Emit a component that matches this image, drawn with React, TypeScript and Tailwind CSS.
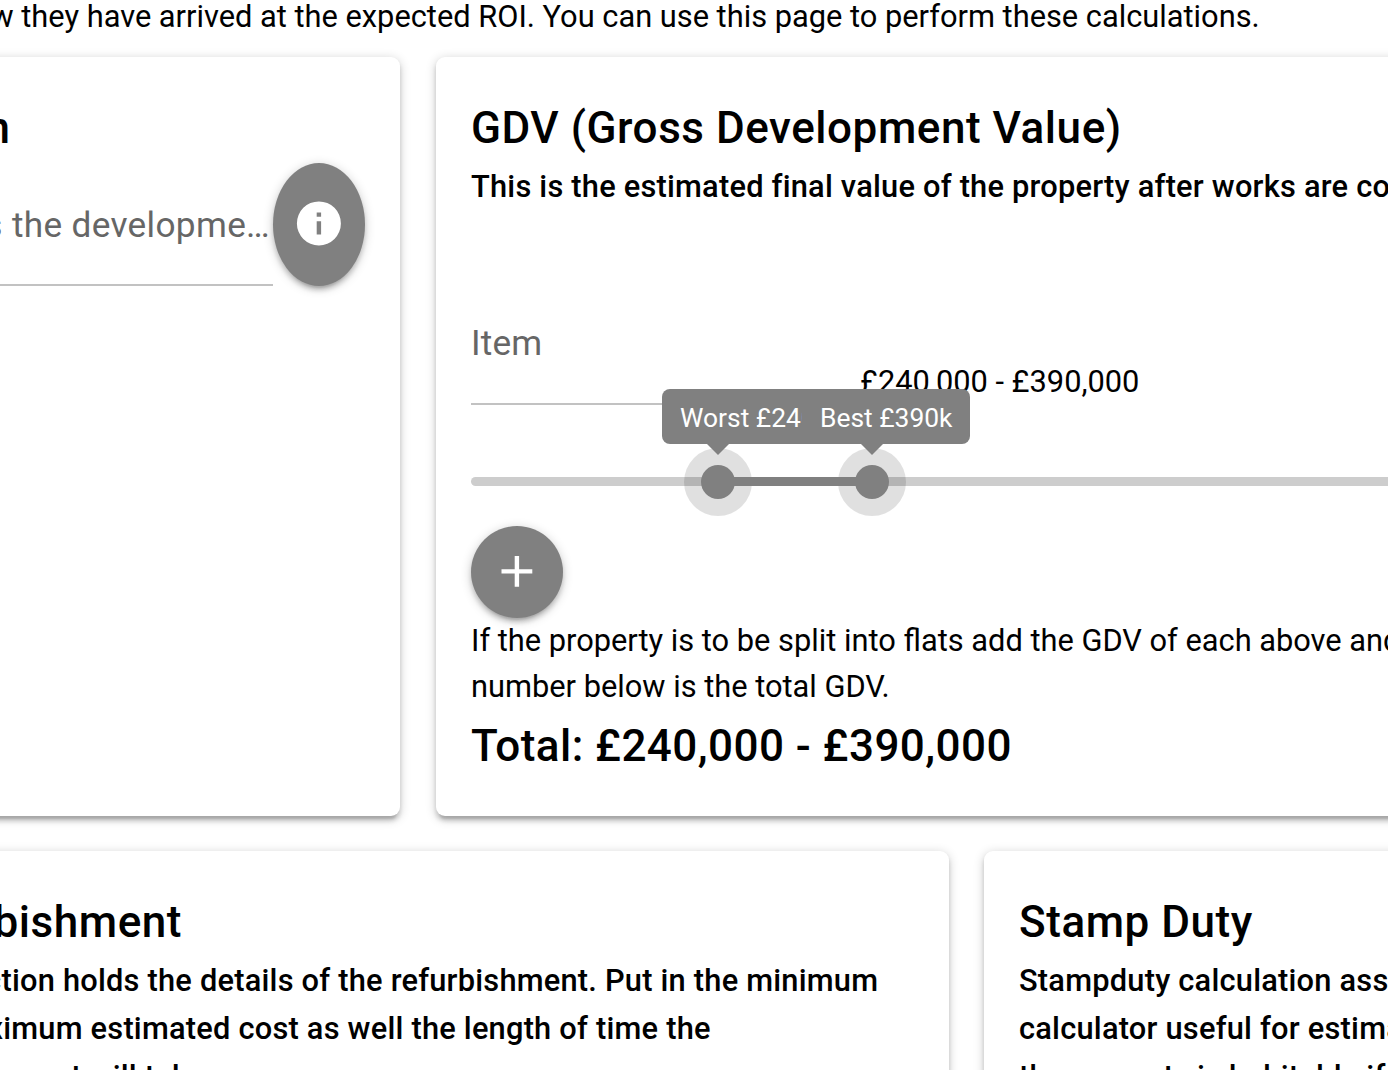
import React from "react";

const card = "shrink-0 rounded-[9px] bg-white shadow-[0_2.2px_11px_rgba(0,0,0,0.2),0_4.4px_4.4px_rgba(0,0,0,0.14),0_6.6px_2.2px_-4.4px_rgba(0,0,0,0.12)]";
const heading = "whitespace-nowrap text-[44px] leading-[64px] font-medium";
const strong = "whitespace-nowrap text-[30.8px] leading-[48px] font-medium tracking-[0.22px]";
const fab = "grid shrink-0 place-items-center rounded-[50%] bg-[#808080] shadow-[0_2.2px_11px_rgba(0,0,0,0.2),0_4.4px_4.4px_rgba(0,0,0,0.14),0_6.6px_2.2px_-4.4px_rgba(0,0,0,0.12)]";

function Thumb({ label, left, bubble }: { label: string; left: string; bubble: string }) {
  return (
    <div className={"absolute top-[-34px] size-[68px] rounded-full bg-black/12 " + left}>
      <div className="absolute left-[17px] top-[17px] size-[34px] rounded-full bg-[#808080]" />
      <div className={"absolute top-[-59px] h-[55px] rounded-lg bg-[#808080] pl-[18px] text-[26.4px] leading-[59px] whitespace-nowrap text-white " + bubble}>
        {label}
      </div>
      <div className="absolute left-[22px] top-[-5px] border-x-[12px] border-t-[12px] border-x-transparent border-t-[#808080]" />
    </div>
  );
}

export default function App() {
  return (
    <main className="flex h-[1070px] w-[1388px] flex-col overflow-hidden bg-white font-[Roboto,sans-serif] text-black">
      <p className="flex h-[57px] shrink-0 whitespace-nowrap text-[30.8px] leading-[34px]">
        <span className="-ml-[9.5px]">w they have arrived at the expected ROI. You can use this page to perform these calculations.</span>
      </p>
      <div className="flex h-[759px] shrink-0 gap-9">
        <section className={card + " -ml-10 w-[440px]"}>
          <h2 className={heading + " mt-[39px] w-[50px] text-right"}>n</h2>
          <div className="mt-[3px] flex">
            <div className="flex h-[123px] w-[313px] shrink-0 justify-end border-b-2 border-[#c2c2c2] pr-[3px] text-[35.2px] leading-[124px] tracking-[0.33px] whitespace-nowrap text-[#666666]">
              s the developme…
            </div>
            <button className={fab + " h-[123px] w-[92px]"}>
              <svg viewBox="0 0 24 24" className="size-[52.8px] -translate-x-[0.5px] -translate-y-px fill-white"><path d="M12 2a10 10 0 1 0 0 20 10 10 0 0 0 0-20m1 15h-2v-6h2zm0-8h-2V7h2z" /></svg>
            </button>
          </div>
        </section>
        <section className={card + " w-[1100px] pl-[35px]"}>
          <h2 className={heading + " mt-[39px] tracking-[0.55px]"}>GDV (Gross Development Value)</h2>
          <h3 className={strong + " mt-[3px]"}>This is the estimated final value of the property after works are complete</h3>
          <div className="mt-[75px] flex h-[119px]">
            <div className="h-[119px] w-[389px] border-b-2 border-[#c2c2c2] text-[35.2px] leading-[115px] tracking-[0.2px] text-[#666666]">Item</div>
            <div className="pt-[76px] text-[30.8px] leading-[40px] whitespace-nowrap">£240,000 - £390,000</div>
          </div>
          <div className="relative mt-[72px] h-[9px] rounded-l-full bg-[#cdcdcd]">
            <div className="relative z-10 ml-[247px] h-[9px] w-[154px] bg-[#808080]" />
            <div className="absolute left-0 top-[5px]">
              <Thumb label="Worst £240k" left="left-[213px]" bubble="left-[-22px] w-[162px]" />
              <Thumb label="Best £390k" left="left-[367px]" bubble="left-[-36px] w-[168px]" />
            </div>
          </div>
          <button className={fab + " mt-10 size-[92px]"}>
            <svg viewBox="0 0 24 24" className="size-[52.8px] -translate-x-[0.5px] -translate-y-px fill-white"><path d="M19 13h-6v6h-2v-6H5v-2h6V5h2v6h6z" /></svg>
          </button>
          <p className="whitespace-nowrap text-[30.8px] leading-[46px]">If the property is to be split into flats add the GDV of each above and<br />number below is the total GDV.</p>
          <h2 className={heading + " mt-1 tracking-[0.45px]"}>Total: £240,000 - £390,000</h2>
        </section>
      </div>
      <div className="mt-[35px] flex h-[300px] shrink-0 gap-[35px]">
        <section className={card + " -ml-[149px] w-[1098px] pl-[33px]"}>
          <h2 className={heading + " mt-[39px] tracking-[0.55px]"}>Refurbishment</h2>
          <p className={strong + " mt-[3px]"}>This section holds the details of the refurbishment. Put in the minimum<br />and maximum estimated cost as well the length of time the<br />refurbishment will take.</p>
        </section>
        <section className={card + " w-[600px] pl-[35px]"}>
          <h2 className={heading + " mt-[39px] tracking-[0.55px]"}>Stamp Duty</h2>
          <p className={strong + " mt-[3px]"}>Stampduty calculation assumes<br />calculator useful for estimating<br />the property is habitable if</p>
        </section>
      </div>
    </main>
  );
}
